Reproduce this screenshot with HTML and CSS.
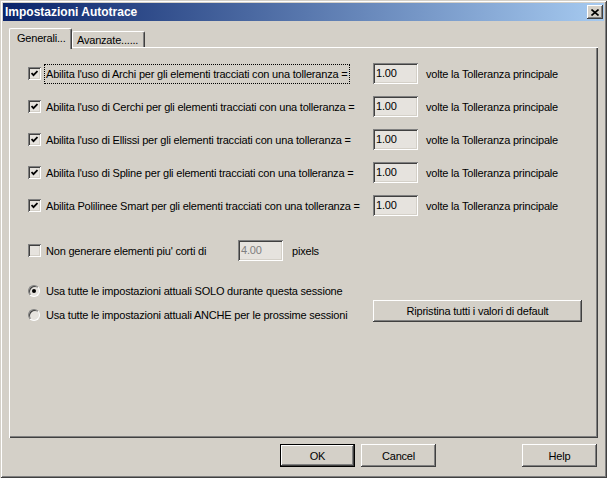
FILE: index.html
```html
<!DOCTYPE html>
<html lang="it">
<head>
    <meta charset="UTF-8">
    <title>Impostazioni Autotrace</title>
    <link rel="stylesheet" href="styles.css">
</head>
<body>
<div class="window">
    <div class="titlebar">
        <span class="title">Impostazioni Autotrace</span>
        <span class="close">
            <svg width="8" height="7" viewBox="0 0 8 7"><path d="M0.5 0.5 L7.5 6.5 M7.5 0.5 L0.5 6.5" stroke="#000" stroke-width="1.6" fill="none"/></svg>
        </span>
    </div>
    <div class="content">
        <div class="tabs">
            <div class="tab active">Generali...</div>
            <div class="tab">Avanzate......</div>
        </div>
        <div class="panel">
            <div class="row first">
                <span class="check"><svg width="7" height="7" viewBox="0 0 7 7"><path d="M0.5 3 L2.5 5.2 L6.5 1" stroke="#000" stroke-width="1.8" fill="none"/></svg></span>
                <span class="label"><span class="focus">Abilita l'uso di Archi per gli elementi tracciati con una tolleranza =</span></span>
                <span class="field">1.00</span>
                <span class="unit">volte la Tolleranza principale</span>
            </div>
            <div class="row">
                <span class="check"><svg width="7" height="7" viewBox="0 0 7 7"><path d="M0.5 3 L2.5 5.2 L6.5 1" stroke="#000" stroke-width="1.8" fill="none"/></svg></span>
                <span class="label">Abilita l'uso di Cerchi per gli elementi tracciati con una tolleranza =</span>
                <span class="field">1.00</span>
                <span class="unit">volte la Tolleranza principale</span>
            </div>
            <div class="row">
                <span class="check"><svg width="7" height="7" viewBox="0 0 7 7"><path d="M0.5 3 L2.5 5.2 L6.5 1" stroke="#000" stroke-width="1.8" fill="none"/></svg></span>
                <span class="label">Abilita l'uso di Ellissi per gli elementi tracciati con una tolleranza =</span>
                <span class="field">1.00</span>
                <span class="unit">volte la Tolleranza principale</span>
            </div>
            <div class="row">
                <span class="check"><svg width="7" height="7" viewBox="0 0 7 7"><path d="M0.5 3 L2.5 5.2 L6.5 1" stroke="#000" stroke-width="1.8" fill="none"/></svg></span>
                <span class="label">Abilita l'uso di Spline per gli elementi tracciati con una tolleranza =</span>
                <span class="field">1.00</span>
                <span class="unit">volte la Tolleranza principale</span>
            </div>
            <div class="row">
                <span class="check"><svg width="7" height="7" viewBox="0 0 7 7"><path d="M0.5 3 L2.5 5.2 L6.5 1" stroke="#000" stroke-width="1.8" fill="none"/></svg></span>
                <span class="label">Abilita Polilinee Smart per gli elementi tracciati con una tolleranza =</span>
                <span class="field">1.00</span>
                <span class="unit">volte la Tolleranza principale</span>
            </div>

            <div class="row minlen">
                <span class="check"></span>
                <span class="label">Non generare elementi piu' corti di</span>
                <span class="field disabled">4.00</span>
                <span class="unit">pixels</span>
            </div>

            <div class="options">
                <div class="radios">
                    <div class="radio-row"><span class="radio on"></span><span>Usa tutte le impostazioni attuali SOLO durante questa sessione</span></div>
                    <div class="radio-row"><span class="radio"></span><span>Usa tutte le impostazioni attuali ANCHE per le prossime sessioni</span></div>
                </div>
                <div class="button reset">Ripristina tutti i valori di default</div>
            </div>
        </div>
        <div class="footer">
            <div class="button default">OK</div>
            <div class="button">Cancel</div>
            <div class="button help">Help</div>
        </div>
    </div>
</div>
</body>
</html>
```

FILE: styles.css
```css
body {
    margin: 0;
    font-family: "Liberation Sans", Arial, sans-serif;
    font-size: 11px;
    letter-spacing: -0.2px;
    color: #000;
    background: #d4d0c8;
}

.window {
    width: 607px;
    height: 478px;
    box-sizing: border-box;
    padding: 3px;
    background: #d4d0c8;
    box-shadow: inset 1px 1px #d4d0c8, inset -1px -1px #404040, inset 2px 2px #fff, inset -2px -2px #808080;
}

.titlebar {
    height: 18px;
    display: flex;
    align-items: center;
    justify-content: space-between;
    padding: 0 1px 0 2px;
    background: linear-gradient(to right, #0a246a, #a6caf0);
}
.title {color: #fff; font-weight: bold; font-size: 12px; letter-spacing: 0;}
.close {
    width: 16px;
    height: 14px;
    display: flex;
    align-items: center;
    justify-content: center;
    background: #d4d0c8;
    box-shadow: inset -1px -1px #404040, inset 1px 1px #fff, inset -2px -2px #808080;
}

.content {padding: 7px 0 0 6px;}

.tabs {display: flex; align-items: flex-end; height: 19px;}
.tab {
    width: 73px;
    height: 16px;
    box-sizing: border-box;
    padding: 2px 0 0 4px;
    border-left: 1px solid #fff;
    border-top: 1px solid #fff;
    border-right: 1px solid #404040;
    box-shadow: inset -1px 0 #808080;
    border-radius: 2px 2px 0 0;
    background: #d4d0c8;
}
.tab.active {
    width: 63px;
    height: 21px;
    margin-bottom: -2px;
    padding: 3px 0 0 7px;
    position: relative;
    z-index: 1;
}

.panel {
    width: 589px;
    height: 391px;
    box-sizing: border-box;
    padding: 16px 0 0 19px;
    box-shadow: inset 1px 1px #fff, inset -1px -1px #404040, inset -2px -2px #808080;
}

.row {display: flex; align-items: center; height: 21px; margin-top: 12px;}
.row.first {margin-top: 0; margin-bottom: 3px;}
.row .label {width: 327px; white-space: nowrap;}
.row .unit {margin-left: 8px;}

.minlen {margin-top: 24px;}
.minlen .label {width: 192px;}
.minlen .unit {margin-left: 9px;}

.check {
    width: 13px;
    height: 13px;
    margin-right: 5px;
    flex: none;
    box-sizing: border-box;
    display: flex;
    align-items: center;
    justify-content: center;
    background: #e6e3de;
    box-shadow: inset 1px 1px #808080, inset -1px -1px #fff, inset 2px 2px #404040, inset -2px -2px #d4d0c8;
}

.focus {
    display: inline-block;
    line-height: 14px;
    padding: 2px 2px 2px 1px;
    margin-left: -1px;
    outline: 1px dotted #000;
}

.field {
    width: 45px;
    height: 21px;
    flex: none;
    box-sizing: border-box;
    padding: 4px 0 0 3px;
    background: #e6e3de;
    box-shadow: inset 1px 1px #808080, inset -1px -1px #fff, inset 2px 2px #404040, inset -2px -2px #d4d0c8;
}
.field.disabled {color: #808080;}

.options {display: flex; margin-top: 18px;}
.radios {width: 345px;}
.radio-row {display: flex; align-items: center; height: 24px;}
.radio {
    width: 12px;
    height: 12px;
    margin-right: 6px;
    box-sizing: border-box;
    border-radius: 50%;
    border: 1px solid;
    border-color: #808080 #fff #fff #808080;
    box-shadow: inset 1px 1px #404040;
    background: #e6e3de;
    display: flex;
    align-items: center;
    justify-content: center;
}
.radio.on::after {
    content: "";
    width: 4px;
    height: 4px;
    border-radius: 50%;
    background: #000;
}

.button {
    width: 75px;
    height: 23px;
    box-sizing: border-box;
    display: flex;
    align-items: center;
    justify-content: center;
    background: #d4d0c8;
    box-shadow: inset -1px -1px #404040, inset 1px 1px #fff, inset -2px -2px #808080;
}
.button.default {border: 1px solid #000;}
.button.reset {width: 209px; height: 22px; margin-top: 21px;}

.footer {
    display: flex;
    gap: 6px;
    width: 589px;
    margin-top: 6px;
    padding-left: 271px;
    box-sizing: border-box;
}
.button.help {margin-left: auto; margin-right: 1px;}
```
